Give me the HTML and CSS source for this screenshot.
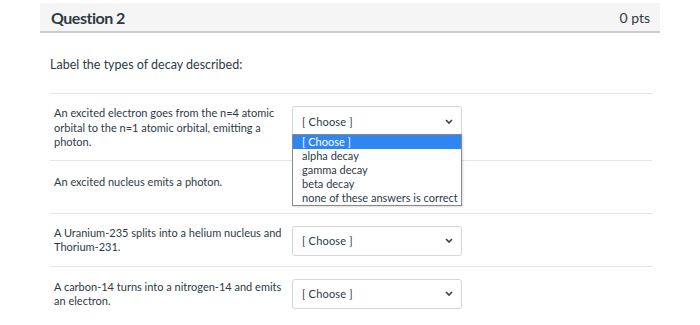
FILE: index.html
```html
<!DOCTYPE html>
<html lang="en">
<head>
    <meta charset="UTF-8">
    <title>Question 2</title>
    <link rel="stylesheet" href="styles.css">
</head>
<body>
    <div class="quiz">
        <div class="header">
            <h2>Question 2</h2>
            <span class="pts">0 pts</span>
        </div>
        <div class="content">
            <p class="prompt">Label the types of decay described:</p>
            <div class="rows">
                <div class="row">
                    <div class="label">An excited electron goes from the n=4 atomic orbital to the n=1 atomic orbital, emitting a photon.</div>
                    <div class="pick">
                        <div class="select">[ Choose ]
                            <svg class="arrow" width="8" height="5" viewBox="0 0 8 5"><path d="M1 1 L4 4 L7 1" fill="none" stroke="#3a3f44" stroke-width="1.6"/></svg>
                        </div>
                        <ul class="options">
                            <li class="picked">[ Choose ]</li>
                            <li>alpha decay</li>
                            <li>gamma decay</li>
                            <li>beta decay</li>
                            <li>none of these answers is correct</li>
                        </ul>
                    </div>
                </div>
                <div class="row">
                    <div class="label single">An excited nucleus emits a photon.</div>
                    <div class="pick">
                        <div class="select covered">[ Choose ]
                            <svg class="arrow" width="8" height="5" viewBox="0 0 8 5"><path d="M1 1 L4 4 L7 1" fill="none" stroke="#3a3f44" stroke-width="1.6"/></svg>
                        </div>
                    </div>
                </div>
                <div class="row">
                    <div class="label">A Uranium-235 splits into a helium nucleus and Thorium-231.</div>
                    <div class="pick">
                        <div class="select">[ Choose ]
                            <svg class="arrow" width="8" height="5" viewBox="0 0 8 5"><path d="M1 1 L4 4 L7 1" fill="none" stroke="#3a3f44" stroke-width="1.6"/></svg>
                        </div>
                    </div>
                </div>
                <div class="row">
                    <div class="label lower">A carbon-14 turns into a nitrogen-14 and emits an electron.</div>
                    <div class="pick">
                        <div class="select">[ Choose ]
                            <svg class="arrow" width="8" height="5" viewBox="0 0 8 5"><path d="M1 1 L4 4 L7 1" fill="none" stroke="#3a3f44" stroke-width="1.6"/></svg>
                        </div>
                    </div>
                </div>
            </div>
        </div>
    </div>
</body>
</html>
```
FILE: styles.css
```css
*{
    margin: 0;
    padding: 0;
    box-sizing: border-box;
    font-family: "Lato", sans-serif;
}
body{
    background: #fff;
    color: #2d3b45;
}
.quiz{
    width: 620px;
    margin: 3px 0 0 40px;
}
.header{
    height: 30px;
    display: flex;
    align-items: center;
    justify-content: space-between;
    padding: 0 10px 0 11px;
    background: #f5f5f5;
    border-bottom: 2px solid #c7cdd1;
}
.header h2{
    font-size: 16px;
    font-weight: 700;
    letter-spacing: -0.5px;
}
.header .pts{
    font-size: 14px;
}
.content{
    padding: 0 8px 0 10px;
}
.prompt{
    font-size: 12.5px;
    line-height: 16px;
    margin: 24px 0 20px;
}
.rows .row{
    display: flex;
    align-items: flex-start;
    gap: 6px;
    padding: 12px 0 10px 4px;
    border-top: 1px solid #e5e5e5;
}
.row .label{
    width: 232px;
    font-size: 11px;
    line-height: 14.5px;
}
.row .label.single{
    margin-top: 2px;
}
.row .label.lower{
    margin-top: 1px;
}
.pick{
    position: relative;
    width: 170px;
}
.select{
    height: 30px;
    display: flex;
    align-items: center;
    justify-content: space-between;
    padding: 0 8px 0 9px;
    font-size: 11px;
    letter-spacing: 0.2px;
    border: 1px solid #d6d6d6;
    border-radius: 3px;
    background: #fff;
}
.select.covered{
    visibility: hidden;
}
.options{
    position: absolute;
    top: 28px;
    left: 0;
    width: 170px;
    list-style: none;
    background: #fff;
    border: 1px solid #8a8a8a;
    box-shadow: 1px 1px 2px rgba(0,0,0,0.15);
    z-index: 2;
}
.options li{
    height: 14px;
    line-height: 14px;
    padding-left: 9px;
    font-size: 11px;
    color: #2d3b45;
    white-space: nowrap;
}
.options li.picked{
    background: #2f86f0;
    color: #fff;
}
```
